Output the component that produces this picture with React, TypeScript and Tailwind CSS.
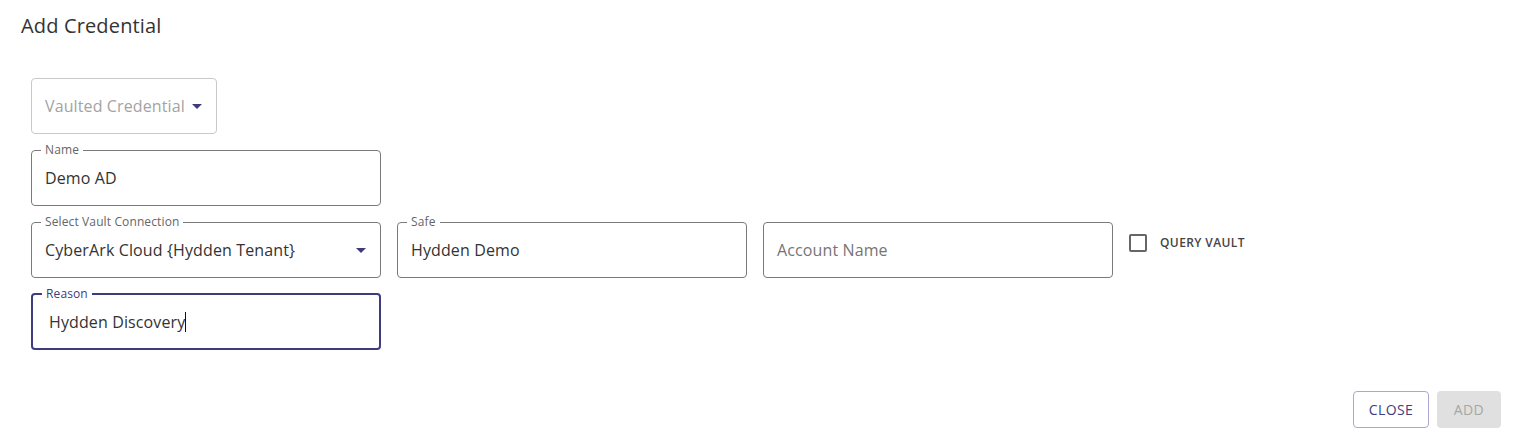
import type { ReactNode } from 'react';

const Caret = () => (
  <svg width="10" height="5" viewBox="0 0 10 5" className="shrink-0">
    <path d="M0 0h10L5 5z" fill="#3d3b7c" />
  </svg>
);

function Field({
  label,
  width = 'w-[350px]',
  focused = false,
  children
}: {
  label?: string;
  width?: string;
  focused?: boolean;
  children: ReactNode;
}) {
  if (!label) {
    return (
      <div className={`${width} mt-[6px] flex h-14 items-center rounded border border-[#7a7a7a] px-[13px]`}>
        {children}
      </div>
    );
  }
  return (
    <fieldset
      className={`${width} m-0 h-[62px] min-w-0 rounded p-0 ${
        focused ? 'border-2 border-[#3f3c7e]' : 'border border-[#7a7a7a]'
      }`}
    >
      <legend
        className={`ml-[9px] px-1 text-[12px] leading-3 ${focused ? 'ml-[8px] text-[#3f3c7e]' : 'text-[#666]'}`}
      >
        {label}
      </legend>
      <div className={`flex h-[44px] items-center ${focused ? 'px-[16px]' : 'px-[13px]'}`}>{children}</div>
    </fieldset>
  );
}

export default function App() {
  return (
    <div className="flex h-[442px] w-full flex-col bg-white font-['Open_Sans',sans-serif] text-[#333]">
      <h2 className="pl-[21px] pt-[13px] text-[20px] font-normal leading-[26px] tracking-[0.15px] text-[#333]">
        Add Credential
      </h2>

      <div className="mt-[39px] flex flex-col gap-[10px] pl-[31px] tracking-[0.12px]">
        <div className="flex h-14 w-[186px] items-center justify-between rounded border border-[#c9c9c9] pl-[13px] pr-[14px]">
          <span className="text-[16px] text-[#a3a3a3]">Vaulted Credential</span>
          <Caret />
        </div>

        <Field label="Name">
          <span className="text-[16px] text-[#333]">Demo AD</span>
        </Field>

        <div className="flex items-start gap-4">
          <Field label="Select Vault Connection">
            <div className="flex w-full items-center justify-between pr-[1px]">
              <span className="text-[16px] text-[#333]">CyberArk Cloud {'{Hydden Tenant}'}</span>
              <Caret />
            </div>
          </Field>
          <Field label="Safe">
            <span className="text-[16px] text-[#333]">Hydden Demo</span>
          </Field>
          <Field>
            <span className="text-[16px] text-[#757575]">Account Name</span>
          </Field>
          <div className="mt-[6px] flex h-[42px] items-center">
            <span className="h-[18px] w-[18px] rounded-[2px] border-2 border-[#666]" />
            <span className="ml-[13px] text-[12px] font-semibold tracking-[0.4px] text-[#444]">QUERY VAULT</span>
          </div>
        </div>

        <Field label="Reason" focused>
          <span className="text-[16px] text-[#333]">Hydden Discovery</span>
          <span className="h-[20px] w-px bg-[#111]" />
        </Field>
      </div>

      <div className="mt-auto flex justify-end gap-2 pb-[14px] pr-3">
        <button className="h-[37px] w-[76px] rounded border border-[#aaa8d2] text-[14px] font-medium tracking-[0.4px] text-[#3f3d80]">
          CLOSE
        </button>
        <button className="h-[37px] w-[64px] rounded bg-[#e0e0e0] text-[14px] font-medium tracking-[0.4px] text-[#a6a6a6]">
          ADD
        </button>
      </div>
    </div>
  );
}
